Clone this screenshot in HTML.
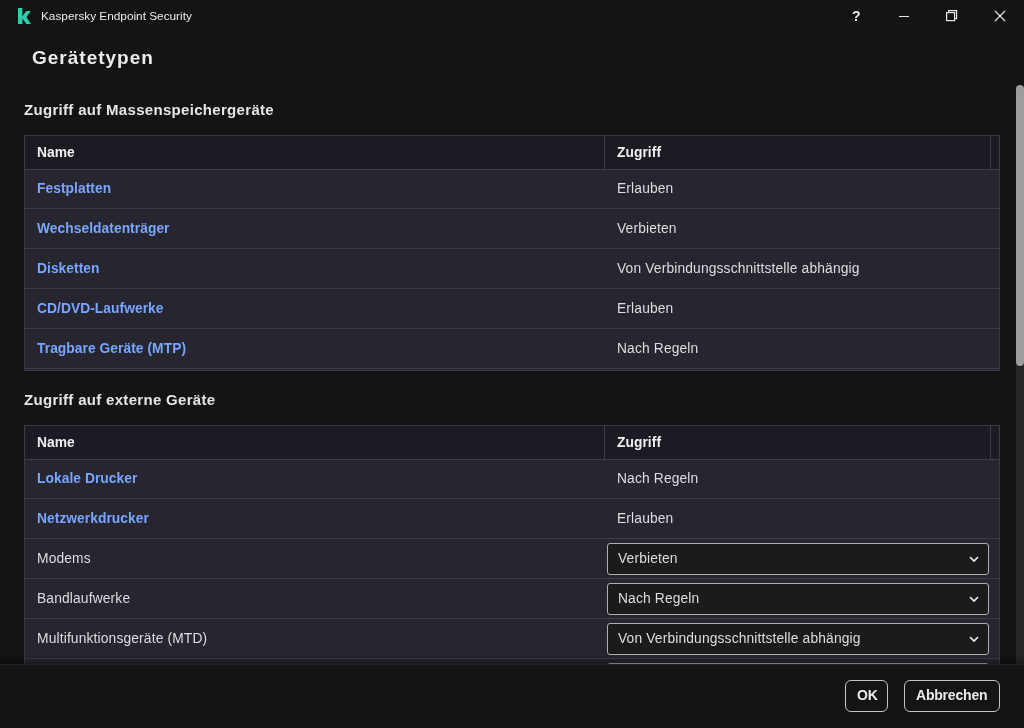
<!DOCTYPE html>
<html><head><meta charset="utf-8">
<style>
*{margin:0;padding:0;box-sizing:border-box;-webkit-font-smoothing:antialiased}
html,body{width:1024px;height:728px;overflow:hidden;background:#141414;font-family:"Liberation Sans",sans-serif;color:#dcdcdc}
.abs{position:absolute}
.t{position:absolute;white-space:nowrap;line-height:1;will-change:transform}
#title{left:41px;top:10.5px;font-size:11.8px;color:#ebebeb}
#h1{left:32px;top:48px;font-size:19px;letter-spacing:1px;font-weight:bold;color:#ececec}
.h2{left:24px;font-size:15px;letter-spacing:0.31px;font-weight:bold;color:#e6e6e6}
.tbl{position:absolute;left:24px;width:976px;border:1px solid #3a3a40;background:#262530}
.hdr{position:absolute;left:0;top:0;width:974px;height:34px;background:#1b1b24;border-bottom:1px solid #3e3d46}
.hdr .col2{position:absolute;left:579px;top:0;width:1px;height:33px;background:#3e3d46}
.hdr .col3{position:absolute;left:965px;top:0;width:1px;height:33px;background:#3e3d46}
.hdr .t{font-weight:bold;font-size:13.8px;letter-spacing:0.05px;color:#f0f0f0;top:9.5px}
.row{position:absolute;left:0;width:974px;height:40px;border-bottom:1px solid #3e3d46}
.row .t{top:12.6px;font-size:13.8px}
.row.r1{height:39px}.row.r1 .t{top:11.6px}
.lnk{color:#79a6ff;font-weight:bold;letter-spacing:0.05px}
.val{color:#dedede;letter-spacing:0.15px}
.sel{position:absolute;left:582px;top:4px;width:382px;height:32px;border:1px solid #b0b0b0;border-radius:3px;background:#1b1b1b}
.sel .t{left:10px;top:7.6px;color:#dedede;letter-spacing:0.15px;font-size:13.8px}
.sel svg{position:absolute;left:361px;top:12px}
#footer{position:absolute;left:0;top:664px;width:1024px;height:64px;background:#141414;border-top:1px solid #232323}
.btn{position:absolute;top:680px;height:32px;border:1.5px solid #c4c4c4;border-radius:6px;background:#141414}
.btn .t{font-weight:bold;font-size:14px;letter-spacing:-0.2px;color:#ececec;top:7px}
</style></head><body>
<!-- title bar -->
<svg class="abs" style="left:18px;top:8px" width="14" height="16" viewBox="0 0 14 16"><path d="M0 0H4.4V8.2L8.3 3.1H12.8L8.4 9.3L13 16H8.4L4.4 10.6V16H0Z" fill="#28d1ab"/></svg>
<div class="t" id="title">Kaspersky Endpoint Security</div>
<div class="t" style="left:852px;top:8.5px;font-size:14px;font-weight:bold;color:#ececec">?</div>
<div class="abs" style="left:899px;top:16px;width:10px;height:1.2px;background:#e8e8e8"></div>
<svg class="abs" style="left:945px;top:9px" width="14" height="14" viewBox="0 0 14 14" fill="none" stroke="#eaeaea" stroke-width="1.2"><rect x="1.6" y="3.6" width="8" height="8"/><path d="M3.6 3.6V1.6h8v8h-2"/></svg>
<svg class="abs" style="left:994px;top:10px" width="12" height="12" viewBox="0 0 12 12" stroke="#eaeaea" stroke-width="1.1"><path d="M1 1L11 11M11 1L1 11"/></svg>

<div class="t" id="h1">Gerätetypen</div>

<div id="content" class="abs" style="left:0;top:0;width:1024px;height:664px;overflow:hidden">
<div class="t h2" style="top:102px">Zugriff auf Massenspeichergeräte</div>
<div class="tbl" style="top:135px;height:236px">
  <div class="hdr"><div class="t" style="left:12px">Name</div><div class="col2"></div><div class="t" style="left:592px">Zugriff</div><div class="col3"></div></div>
  <div class="row r1" style="top:34px"><div class="t lnk" style="left:12px">Festplatten</div><div class="t val" style="left:592px">Erlauben</div></div>
  <div class="row" style="top:73px"><div class="t lnk" style="left:12px">Wechseldatenträger</div><div class="t val" style="left:592px">Verbieten</div></div>
  <div class="row" style="top:113px"><div class="t lnk" style="left:12px">Disketten</div><div class="t val" style="left:592px">Von Verbindungsschnittstelle abhängig</div></div>
  <div class="row" style="top:153px"><div class="t lnk" style="left:12px">CD/DVD-Laufwerke</div><div class="t val" style="left:592px">Erlauben</div></div>
  <div class="row" style="top:193px"><div class="t lnk" style="left:12px">Tragbare Geräte (MTP)</div><div class="t val" style="left:592px">Nach Regeln</div></div>
</div>

<div class="t h2" style="top:392px">Zugriff auf externe Geräte</div>
<div class="tbl" style="top:425px;height:300px">
  <div class="hdr"><div class="t" style="left:12px">Name</div><div class="col2"></div><div class="t" style="left:592px">Zugriff</div><div class="col3"></div></div>
  <div class="row r1" style="top:34px"><div class="t lnk" style="left:12px">Lokale Drucker</div><div class="t val" style="left:592px">Nach Regeln</div></div>
  <div class="row" style="top:73px"><div class="t lnk" style="left:12px">Netzwerkdrucker</div><div class="t val" style="left:592px">Erlauben</div></div>
  <div class="row" style="top:113px"><div class="t val" style="left:12px">Modems</div><div class="sel"><div class="t">Verbieten</div><svg width="10" height="7" viewBox="0 0 10 7"><path d="M1 1l4 4 4-4" fill="none" stroke="#eee" stroke-width="1.6"/></svg></div></div>
  <div class="row" style="top:153px"><div class="t val" style="left:12px">Bandlaufwerke</div><div class="sel"><div class="t">Nach Regeln</div><svg width="10" height="7" viewBox="0 0 10 7"><path d="M1 1l4 4 4-4" fill="none" stroke="#eee" stroke-width="1.6"/></svg></div></div>
  <div class="row" style="top:193px"><div class="t val" style="left:12px">Multifunktionsgeräte (MTD)</div><div class="sel"><div class="t">Von Verbindungsschnittstelle abhängig</div><svg width="10" height="7" viewBox="0 0 10 7"><path d="M1 1l4 4 4-4" fill="none" stroke="#eee" stroke-width="1.6"/></svg></div></div>
  <div class="row" style="top:233px"><div class="sel"></div></div>
</div>
<!-- scrollbar -->
<div class="abs" style="left:1016px;top:340px;width:8px;height:324px;background:#262626"></div>
<div class="abs" style="left:1016px;top:85px;width:8px;height:281px;background:#9d9d9d;border-radius:4px"></div>
</div>

<div class="abs" style="left:0;top:656px;width:1024px;height:8px;background:linear-gradient(rgba(0,0,0,0),rgba(0,0,0,0.32))"></div>
<div id="footer">
  <div class="btn" style="left:845px;width:43px;top:15px"><div class="t" style="left:11px">OK</div></div>
  <div class="btn" style="left:904px;width:96px;top:15px"><div class="t" style="left:11px">Abbrechen</div></div>
</div>
</body></html>
